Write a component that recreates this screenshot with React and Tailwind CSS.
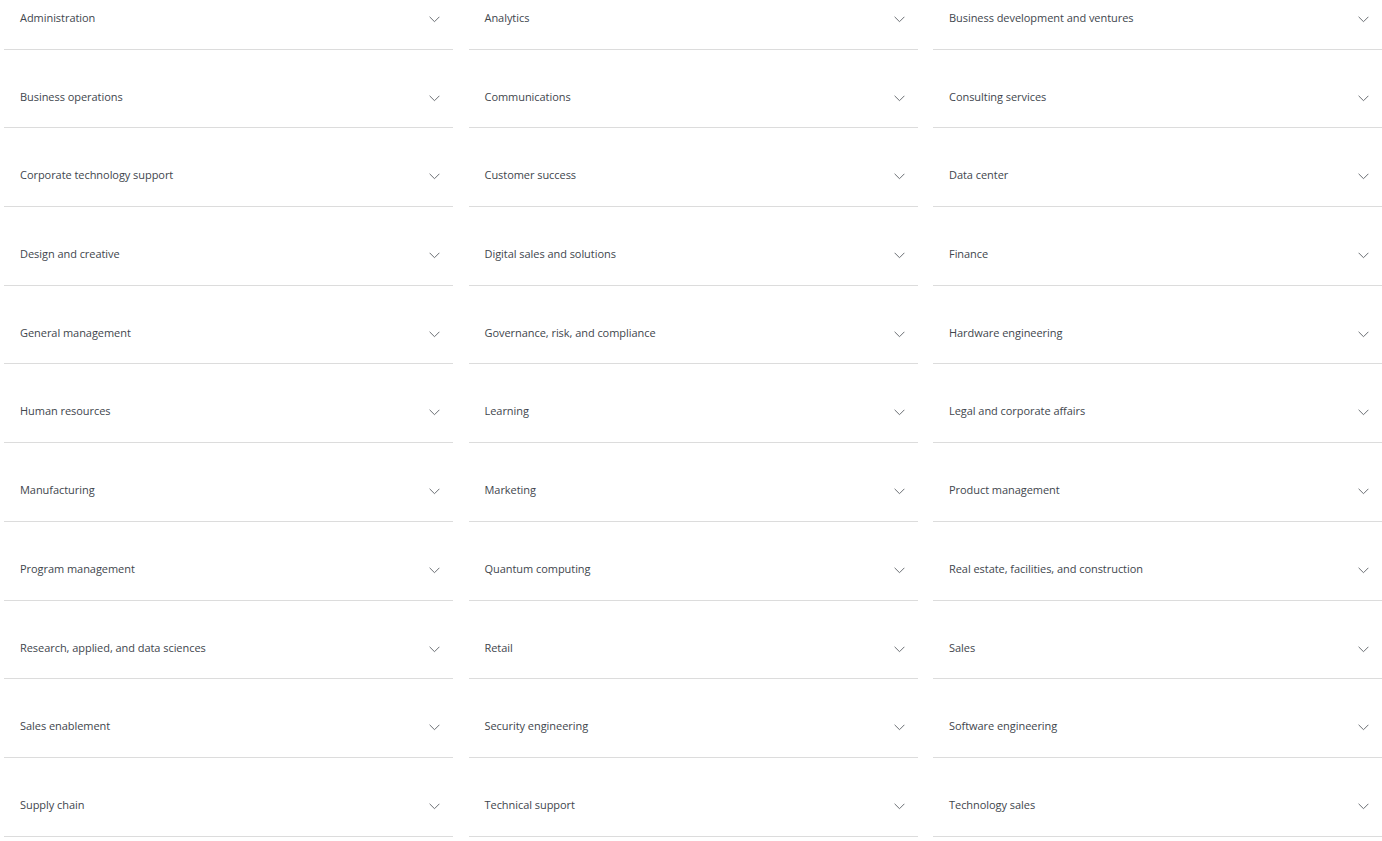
const items = [
  "Administration",
  "Analytics",
  "Business development and ventures",
  "Business operations",
  "Communications",
  "Consulting services",
  "Corporate technology support",
  "Customer success",
  "Data center",
  "Design and creative",
  "Digital sales and solutions",
  "Finance",
  "General management",
  "Governance, risk, and compliance",
  "Hardware engineering",
  "Human resources",
  "Learning",
  "Legal and corporate affairs",
  "Manufacturing",
  "Marketing",
  "Product management",
  "Program management",
  "Quantum computing",
  "Real estate, facilities, and construction",
  "Research, applied, and data sciences",
  "Retail",
  "Sales",
  "Sales enablement",
  "Security engineering",
  "Software engineering",
  "Supply chain",
  "Technical support",
  "Technology sales",
];

function Chevron() {
  return (
    <svg width="11" height="7" viewBox="0 0 11 7" fill="none" className="shrink-0">
      <path d="M0.6 0.8 5.5 5.7 10.4 0.8" stroke="#6a6e73" strokeWidth="1" />
    </svg>
  );
}

function Row({ label }) {
  return (
    <button className="flex h-[78.7px] w-full items-start justify-between border-b border-[#dcdcdc] pl-4 pr-[13px] pt-[39px] text-left">
      <span className="text-[11px] leading-[16px] tracking-[-0.05px] text-[#41464d]">{label}</span>
      <span className="pt-[6px]">
        <Chevron />
      </span>
    </button>
  );
}

export default function App() {
  return (
    <div
      className="min-h-screen overflow-hidden bg-white"
      style={{ fontFamily: '"Open Sans", "Noto Sans", sans-serif' }}
    >
      <div className="-mt-[29px] grid grid-cols-3 gap-x-[15.5px] pl-[4px]">
        {items.map((label) => (
          <Row key={label} label={label} />
        ))}
      </div>
    </div>
  );
}
